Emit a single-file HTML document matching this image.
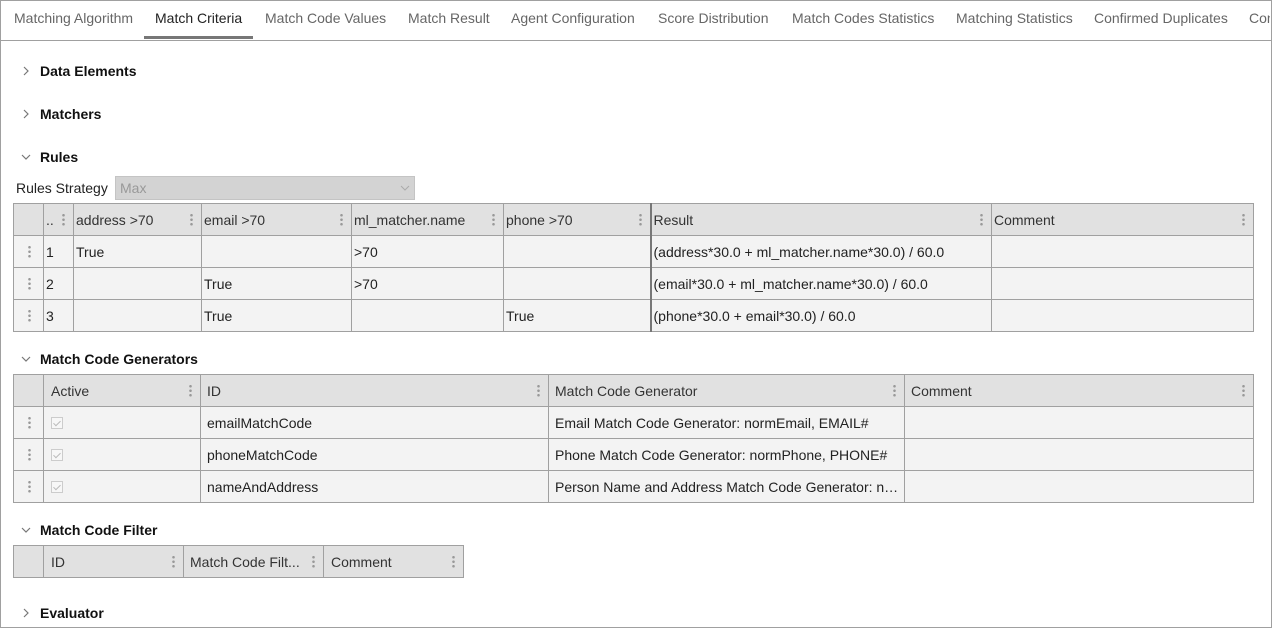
<!DOCTYPE html>
<html><head><meta charset="utf-8"><style>
*{box-sizing:border-box;margin:0;padding:0}
body{width:1272px;height:628px;overflow:hidden;background:#fff;font-family:"Liberation Sans","DejaVu Sans",sans-serif;font-size:14px;color:#222;position:relative}
.frame{position:absolute;left:0;top:0;width:1272px;height:628px;border:1px solid #a0a0a0;border-top:1px solid #a0a0a0}
.tab{position:absolute;top:10px;color:#666;white-space:nowrap}
.tab.act{color:#222}
.tabline{position:absolute;left:0;top:40px;width:1272px;height:1px;background:#a0a0a0}
.uline{position:absolute;left:144px;top:36px;width:109px;height:3px;background:#777}
.sec{position:absolute;left:40px;font-weight:bold;color:#111}
.chev{position:absolute;left:20px;width:12px;height:12px}
table{position:absolute;border-collapse:collapse;table-layout:fixed}
tr{height:32px}
td{border:1px solid #a0a0a0;padding:0 2px;white-space:nowrap;overflow:hidden;position:relative;background:#f3f3f3;color:#222}
tr.h td{background:#e1e1e1;color:#333}
.k{position:absolute;top:9px;width:3px;height:13px;background:radial-gradient(circle,#999 1.2px,transparent 1.4px) 0 0/3px 4.5px repeat-y}
tr.h .k{right:8px}
td.n .k{left:50%;margin-left:-1px}
.cb{display:inline-block;width:12px;height:12px;border:1px solid #ccc;background:#f7f7f7;position:relative;top:1px;margin-left:5px}
.cb:after{content:"";position:absolute;left:3px;top:1px;width:3px;height:6px;border:solid #bbb;border-width:0 1px 1px 0;transform:rotate(45deg)}
.thick{border-left:2px solid #777}
</style></head><body>
<div class="frame"></div>
<span class="tab" style="left:14px">Matching Algorithm</span>
<span class="tab act" style="left:155px">Match Criteria</span>
<span class="tab" style="left:265px">Match Code Values</span>
<span class="tab" style="left:408px">Match Result</span>
<span class="tab" style="left:511px">Agent Configuration</span>
<span class="tab" style="left:658px">Score Distribution</span>
<span class="tab" style="left:792px">Match Codes Statistics</span>
<span class="tab" style="left:956px">Matching Statistics</span>
<span class="tab" style="left:1094px">Confirmed Duplicates</span>
<span class="tab" style="left:1249px;width:21px;overflow:hidden">Confirmed</span>
<div class="uline"></div><div class="tabline"></div>

<svg class="chev" style="top:65px" viewBox="0 0 12 12"><path d="M4 2 L8 6 L4 10" fill="none" stroke="#777" stroke-width="1.2"/></svg>
<div class="sec" style="top:63px">Data Elements</div>
<svg class="chev" style="top:108px" viewBox="0 0 12 12"><path d="M4 2 L8 6 L4 10" fill="none" stroke="#777" stroke-width="1.2"/></svg>
<div class="sec" style="top:106px">Matchers</div>
<svg class="chev" style="top:151px" viewBox="0 0 12 12"><path d="M2 4 L6 8 L10 4" fill="none" stroke="#777" stroke-width="1.2"/></svg>
<div class="sec" style="top:149px">Rules</div>

<div style="position:absolute;left:16px;top:180px;color:#222">Rules Strategy</div>
<div style="position:absolute;left:115px;top:176px;width:300px;height:24px;background:#d3d3d3;border:1px solid #c4c4c4;color:#999;padding:3px 4px">Max
<svg style="position:absolute;right:4px;top:8px" width="10" height="6" viewBox="0 0 10 6"><path d="M1 1 L5 5 L9 1" fill="none" stroke="#aaa"/></svg></div>

<table style="left:13px;top:203px;width:1240px">
<colgroup><col style="width:30px"><col style="width:30px"><col style="width:128px"><col style="width:150px"><col style="width:152px"><col style="width:147px"><col style="width:341px"><col style="width:262px"></colgroup>
<tr class="h"><td></td><td>..<i class="k"></i></td><td>address &gt;70<i class="k"></i></td><td>email &gt;70<i class="k"></i></td><td>ml_matcher.name<i class="k"></i></td><td>phone &gt;70<i class="k"></i></td><td class="thick">Result<i class="k"></i></td><td>Comment<i class="k"></i></td></tr>
<tr><td class="n"><i class="k"></i></td><td>1</td><td>True</td><td></td><td>&gt;70</td><td></td><td class="thick">(address*30.0 + ml_matcher.name*30.0) / 60.0</td><td></td></tr>
<tr><td class="n"><i class="k"></i></td><td>2</td><td></td><td>True</td><td>&gt;70</td><td></td><td class="thick">(email*30.0 + ml_matcher.name*30.0) / 60.0</td><td></td></tr>
<tr><td class="n"><i class="k"></i></td><td>3</td><td></td><td>True</td><td></td><td>True</td><td class="thick">(phone*30.0 + email*30.0) / 60.0</td><td></td></tr>
</table>

<svg class="chev" style="top:353px" viewBox="0 0 12 12"><path d="M2 4 L6 8 L10 4" fill="none" stroke="#777" stroke-width="1.2"/></svg>
<div class="sec" style="top:351px">Match Code Generators</div>

<table style="left:13px;top:374px;width:1240px">
<colgroup><col style="width:30px"><col style="width:157px"><col style="width:348px"><col style="width:356px"><col style="width:349px"></colgroup>
<tr class="h"><td></td><td style="padding-left:7px">Active<i class="k"></i></td><td style="padding-left:6px">ID<i class="k"></i></td><td style="padding-left:6px">Match Code Generator<i class="k"></i></td><td style="padding-left:6px">Comment<i class="k"></i></td></tr>
<tr><td class="n"><i class="k"></i></td><td><span class="cb"></span></td><td style="padding-left:6px">emailMatchCode</td><td style="padding-left:6px">Email Match Code Generator: normEmail, EMAIL#</td><td></td></tr>
<tr><td class="n"><i class="k"></i></td><td><span class="cb"></span></td><td style="padding-left:6px">phoneMatchCode</td><td style="padding-left:6px">Phone Match Code Generator: normPhone, PHONE#</td><td></td></tr>
<tr><td class="n"><i class="k"></i></td><td><span class="cb"></span></td><td style="padding-left:6px">nameAndAddress</td><td style="padding-left:6px">Person Name and Address Match Code Generator: n…</td><td></td></tr>
</table>

<svg class="chev" style="top:524px" viewBox="0 0 12 12"><path d="M2 4 L6 8 L10 4" fill="none" stroke="#777" stroke-width="1.2"/></svg>
<div class="sec" style="top:522px">Match Code Filter</div>

<table style="left:13px;top:545px;width:450px">
<colgroup><col style="width:30px"><col style="width:140px"><col style="width:140px"><col style="width:140px"></colgroup>
<tr class="h"><td></td><td style="padding-left:7px">ID<i class="k"></i></td><td style="padding-left:6px">Match Code Filt...<i class="k"></i></td><td style="padding-left:7px">Comment<i class="k"></i></td></tr>
</table>

<svg class="chev" style="top:607px" viewBox="0 0 12 12"><path d="M4 2 L8 6 L4 10" fill="none" stroke="#777" stroke-width="1.2"/></svg>
<div class="sec" style="top:605px">Evaluator</div>
</body></html>
